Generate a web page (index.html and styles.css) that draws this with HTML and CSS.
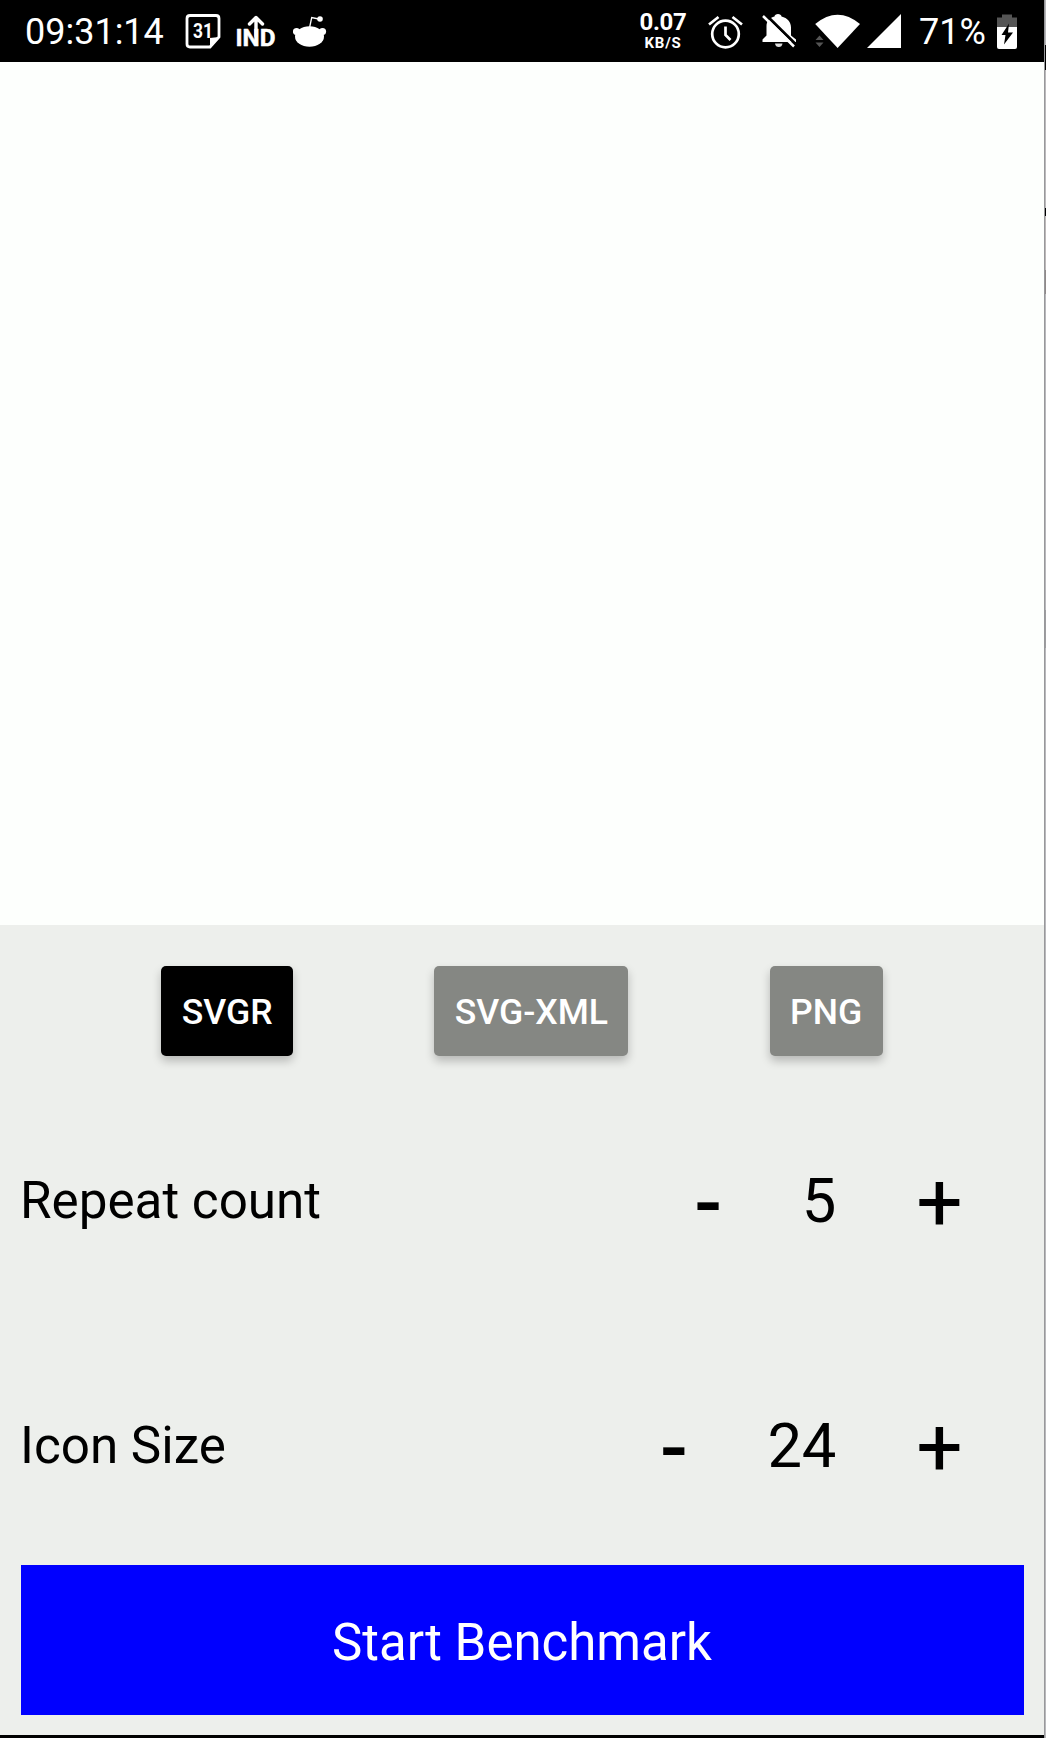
FILE: index.html
```html
<!DOCTYPE html>
<html lang="en">
<head>
<meta charset="utf-8">
<title>Icon Benchmark</title>
<link rel="stylesheet" href="styles.css">
</head>
<body>
<div class="app">
  <main class="screen">
    <header class="status">
      <div class="status-left">
        <span class="clock">09:31:14</span>
        <svg class="icon-calendar" width="36" height="62" viewBox="185 0 36 62">
          <path d="M190 15.500h26q3 0 3 3v18.500l-9 10h-20q-3 0-3-3v-25.500q0-3 3-3z" fill="none" stroke="#fff" stroke-width="2.800"/>
          <path d="M219 37l-9 10v-9z" fill="#fff"/>
          <text x="203" y="38.300" font-size="21" font-weight="700" text-anchor="middle" textLength="20" lengthAdjust="spacingAndGlyphs" fill="#fff">31</text>
        </svg>
        <svg class="icon-ind" width="40" height="62" viewBox="236 0 40 62">
          <text x="235.500" y="46.300" font-size="24" font-weight="700" textLength="40" lengthAdjust="spacingAndGlyphs" fill="#fff" stroke="#fff" stroke-width=".5" stroke-linejoin="round">IND</text>
          <path d="M256 36V18M249.500 24l6.500-6.500 6.500 6.500" fill="none" stroke="#fff" stroke-width="3.400" stroke-linecap="round" stroke-linejoin="round"/>
        </svg>
        <svg class="icon-reddit" width="34" height="62" viewBox="293 0 34 62">
          <g fill="#fff"><ellipse cx="309.500" cy="36.500" rx="14.500" ry="10.300"/><circle cx="296.500" cy="31.500" r="3.600"/><circle cx="322.500" cy="31.500" r="3.600"/><circle cx="320" cy="19" r="2.800"/></g>
          <path d="M309.700 27l2-9.500 7 1.500" fill="none" stroke="#fff" stroke-width="1.300"/>
        </svg>
      </div>
      <div class="status-right">
        <div class="speed"><span class="speed-value">0.07</span><span class="speed-unit">KB/S</span></div>
        <svg class="icon-alarm" width="36" height="62" viewBox="708 0 36 62">
          <g fill="none" stroke="#fff" stroke-width="2.700"><circle cx="725.500" cy="34" r="13.300"/><path d="M725.500 26.500v8.500l5 5M709 24.500l9.500-7.500M742 24.500l-9.500-7.500"/></g>
        </svg>
        <svg class="icon-bell" width="36" height="62" viewBox="762 0 36 62">
          <path d="M762.500 42v-2.500l4-4v-9.500c0-5 3.500-8.500 8-9.500 0-3.500 7-3.500 7 0 6 1.500 9.500 5.500 9.500 11v8l5 4v2.500z" fill="#fff"/>
          <path d="M775 43.500h7.500q-.5 3.500-3.700 3.500t-3.800-3.500z" fill="#ddd"/>
          <path d="M765.500 14.500L797 45.500" stroke="#000" stroke-width="3"/>
          <path d="M763 16L794 46.500" stroke="#fff" stroke-width="2.500"/>
        </svg>
        <svg class="icon-wifi" width="46" height="62" viewBox="815 0 46 62">
          <path d="M815.200 24q22.400-18.500 44.800 0L837.600 48z" fill="#fff"/>
          <path d="M815.500 40l4-4.500 4 4.500zM815.500 42.500h8l-4 4.500z" fill="#555"/>
        </svg>
        <svg class="icon-signal" width="34" height="62" viewBox="867 0 34 62"><path d="M867 48L901 14v34z" fill="#fff"/></svg>
        <span class="percent">71%</span>
        <svg class="icon-battery" width="20" height="62" viewBox="997 0 20 62">
          <path d="M1002 14.500h10v3h5v10h-20v-10h5z" fill="#555"/>
          <path d="M997 27h20v20q0 2-2 2h-16q-2 0-2-2z" fill="#fff"/>
          <path d="M1009 23.500l-7.500 11.500h4l-1.500 9.500 9-12h-5z" fill="#000"/>
        </svg>
      </div>
    </header>
    <section class="canvas"></section>
    <section class="controls">
      <div class="formats">
        <button class="format format-active">SVGR</button>
        <button class="format">SVG-XML</button>
        <button class="format">PNG</button>
      </div>
      <div class="setting">
        <span class="label">Repeat count</span>
        <button class="step minus">-</button>
        <span class="value">5</span>
        <button class="step plus">+</button>
      </div>
      <div class="setting">
        <span class="label">Icon Size</span>
        <button class="step minus">-</button>
        <span class="value">24</span>
        <button class="step plus">+</button>
      </div>
      <button class="start">Start Benchmark</button>
    </section>
  </main>
  <div class="edge"></div>
</div>
</body>
</html>
```
FILE: styles.css
```css
* { box-sizing: border-box; }
body { margin: 0; font-family: Roboto, "Liberation Sans", sans-serif; }
button { font: inherit; border: 0; padding: 0; background: none; color: inherit; }
svg { display: block; flex: none; }

.app { display: flex; width: 1046px; height: 1738px; overflow: hidden; }
.screen { display: flex; flex-direction: column; width: 1044px; border-bottom: 3px solid #000; }
.edge { width: 2px; border-left: 1px solid #98989b; background: linear-gradient(#b5b5b8 0 45px, #000 45px 70px, #bbb9bb 70px 208px, #000 208px 216px, #bcb8b8 216px 270px, #8f8989 270px 294px, #b8b8bb 294px 610px, #9d9d9f 610px 648px, #b8b8bb 648px); }

.status { display: flex; justify-content: space-between; height: 62px; background: #000; color: #fff; font-size: 36px; line-height: 64px; }
.status-left, .status-right { display: flex; }
.clock { width: 160px; padding-left: 25px; }
.icon-calendar { margin-left: 25px; }
.icon-ind { margin-left: 15px; }
.icon-reddit { margin-left: 17px; }
.speed { display: flex; flex-direction: column; align-items: center; width: 50px; padding-top: 8px; margin-right: 20px; font-weight: 700; }
.speed-value { font-size: 24px; line-height: 28px; letter-spacing: -.3px; }
.speed-unit { margin-top: 1.5px; font-size: 15px; line-height: 11px; letter-spacing: .8px; }
.icon-alarm { margin-right: 18px; }
.icon-bell { margin-right: 17px; }
.icon-wifi { margin-right: 6px; }
.icon-signal { margin-right: 18px; }
.percent { width: 78px; }
.icon-battery { margin-right: 27px; }

.canvas { height: 863px; background: #fdfffd; }
.controls { display: flex; flex-direction: column; flex: 1; padding: 0 20px 20px; background: #edefec; color: #000; }
.formats { display: flex; justify-content: space-evenly; padding: 41px 0; }
.format { height: 90px; padding: 2px 20.3px 0; border-radius: 5px; background: #858783; color: #fff; font-size: 35.6px; font-weight: 500; box-shadow: 0 5px 10px rgba(0, 0, 0, .23); }
.format-active { background: #000; }

.setting { display: flex; align-items: flex-start; height: 206px; padding-top: 67px; font-size: 61.5px; line-height: 75px; }
.setting + .setting { margin-top: 38.5px; }
.label { flex: 1; font-size: 51.2px; line-height: 73px; }
.value { letter-spacing: -.3px; }
.step { width: 60px; font-size: 82px; font-weight: 400; line-height: 77px; text-align: center; }
.minus { margin-right: 63.5px; font-size: 82px; font-weight: 500; line-height: 78px; }
.plus { margin-left: 73.5px; margin-right: 54.5px; }
.start { width: 1003px; height: 150px; margin: auto 0 0 .5px; padding-top: 4px; background: #00f; color: #fff; font-size: 51px; }
```
